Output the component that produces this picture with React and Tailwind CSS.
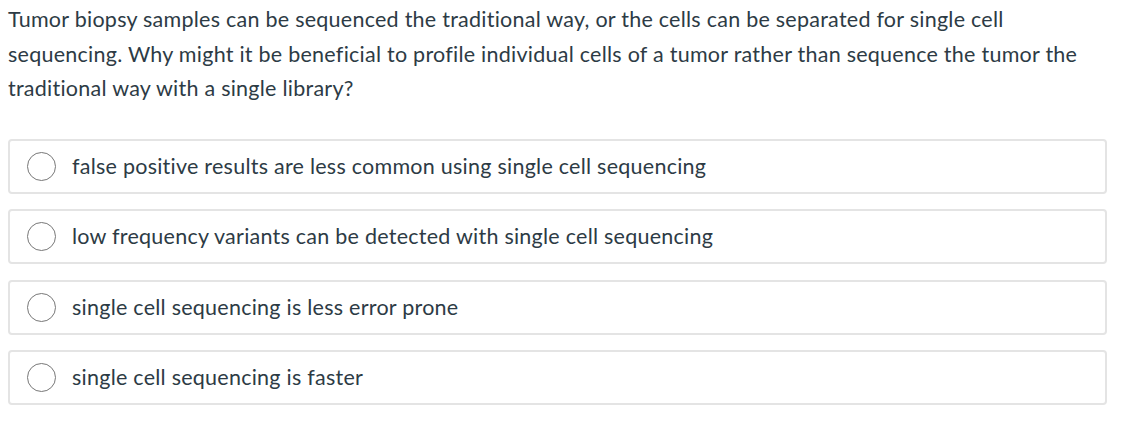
import { useState } from 'react';

const respuestas = [
  'false positive results are less common using single cell sequencing',
  'low frequency variants can be detected with single cell sequencing',
  'single cell sequencing is less error prone',
  'single cell sequencing is faster',
];

const App = () => {
  const [elegida, setElegida] = useState(null);

  return (
    <div className="bg-white w-[1123px] h-[423px] px-2 pt-[2px] text-[#2d3b45] font-['Lato',sans-serif] text-[21.5px] tracking-[0.25px]">
      <p className="leading-[34.5px]">
        Tumor biopsy samples can be sequenced the traditional way, or the cells can be separated for single cell
        <br />
        sequencing. Why might it be beneficial to profile individual cells of a tumor rather than sequence the tumor the
        <br />
        traditional way with a single library?
      </p>

      <div className="mt-[33px] flex flex-col gap-[15.5px] w-[1099px]">
        {respuestas.map((texto, i) => (
          <label
            key={i}
            className="flex items-center h-[55px] border-2 border-[#e4e4e4] rounded-[4px] pl-[17px] cursor-pointer"
          >
            <input
              type="radio"
              name="respuesta"
              className="sr-only"
              checked={elegida === i}
              onChange={() => setElegida(i)}
            />
            <span className="w-[29px] h-[29px] rounded-full border-[1.5px] border-[#777] flex items-center justify-center shrink-0">
              {elegida === i && <span className="w-[15px] h-[15px] rounded-full bg-[#2d3b45]" />}
            </span>
            <span className="ml-[16px]">{texto}</span>
          </label>
        ))}
      </div>
    </div>
  );
};

export default App;
